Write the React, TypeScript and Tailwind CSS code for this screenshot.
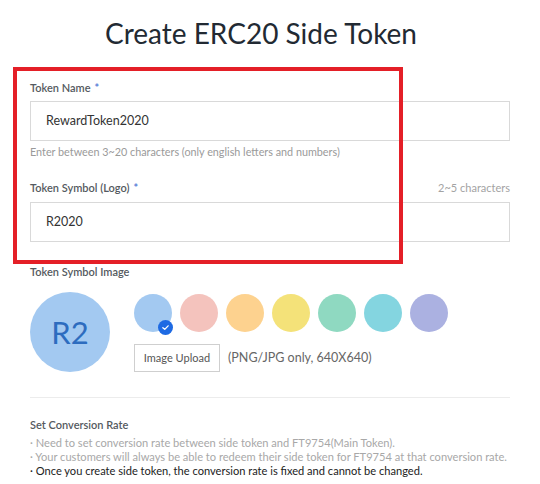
const swatches = ["#a3c9f1", "#f4c3bd", "#fdd28f", "#f4e279", "#8fd9c1", "#84d5e0", "#abb1e1"];

function Label({ text, required, className = "" }: { text: string; required?: boolean; className?: string }) {
  return (
    <div className={`text-[11px] font-semibold leading-[16px] text-[#555a60] ${className}`}>
      {text}
      {required && <span className="ml-1 font-bold text-[#5b7fd8]">*</span>}
    </div>
  );
}

export default function App() {
  return (
    <div className="relative h-[484px] w-[540px] bg-white font-['Lato','Noto_Sans',sans-serif] text-[#333]">
      <h1 className="pr-[18px] pt-[14px] text-center text-[28px] leading-[38px] text-[#222a33]">Create ERC20 Side Token</h1>

      <div className="px-[30px]">
        {/* Token name */}
        <Label text="Token Name" required className="mt-[28px]" />
        <div className="mt-[5px] flex h-[40px] items-center border border-[#d9d9d9] px-[15px] text-[12.5px] text-[#333]">
          RewardToken2020
        </div>
        <p className="mt-[4px] text-[10.8px] leading-[14px] text-[#9a9a9a]">
          Enter between 3~20 characters (only english letters and numbers)
        </p>

        {/* Token symbol */}
        <div className="mt-[21px] flex items-center justify-between">
          <Label text="Token Symbol (Logo)" required />
          <span className="text-[11px] leading-[16px] text-[#a3a3a3]">2~5 characters</span>
        </div>
        <div className="mt-[6px] flex h-[40px] items-center border border-[#d9d9d9] px-[15px] text-[12.5px] text-[#333]">
          R2020
        </div>

        {/* Symbol image */}
        <Label text="Token Symbol Image" className="mt-[22px]" />
        <div className="mt-[12px] flex">
          <div className="flex h-[80px] w-[80px] shrink-0 items-center justify-center rounded-full bg-[#a3c9f1] text-[31px] leading-none text-[#2d6cbf]">
            R2
          </div>
          <div className="ml-[24px] flex flex-col">
            <div className="mt-[2px] flex gap-[8px]">
              {swatches.map((c, i) => (
                <div key={c} className="relative h-[38px] w-[38px] rounded-full" style={{ backgroundColor: c }}>
                  {i === 0 && (
                    <span className="absolute -bottom-[3px] -right-[1px] flex h-[15px] w-[15px] items-center justify-center rounded-full bg-[#1e6ae3]">
                      <svg viewBox="0 0 12 12" className="h-[9px] w-[9px]" fill="none" stroke="white" strokeWidth="1.8" strokeLinecap="round" strokeLinejoin="round">
                        <path d="M2.5 6.2 5 8.5 9.5 3.8" />
                      </svg>
                    </span>
                  )}
                </div>
              ))}
            </div>
            <div className="mt-[12px] flex items-center">
              <button className="h-[28px] w-[86px] border border-[#cfcfcf] text-[11px] text-[#555]">Image Upload</button>
              <span className="ml-[8px] text-[12.5px] text-[#666]">(PNG/JPG only, 640X640)</span>
            </div>
          </div>
        </div>

        <div className="mt-[25px] border-t border-[#ececec]" />

        {/* Conversion rate */}
        <h2 className="mt-[19px] text-[11px] font-semibold leading-[16px] text-[#555a60]">Set Conversion Rate</h2>
        <ul className="mt-[3px] text-[11.1px] leading-[14px]">
          <li className="text-[#a8a8a8]">· Need to set conversion rate between side token and FT9754(Main Token).</li>
          <li className="text-[#a8a8a8]">· Your customers will always be able to redeem their side token for FT9754 at that conversion rate.</li>
          <li className="text-[#222]">· Once you create side token, the conversion rate is fixed and cannot be changed.</li>
        </ul>
      </div>

      {/* Annotation box */}
      <div className="absolute left-[13px] top-[67px] h-[197px] w-[390px] border-4 border-[#e41f27]" />
    </div>
  );
}
